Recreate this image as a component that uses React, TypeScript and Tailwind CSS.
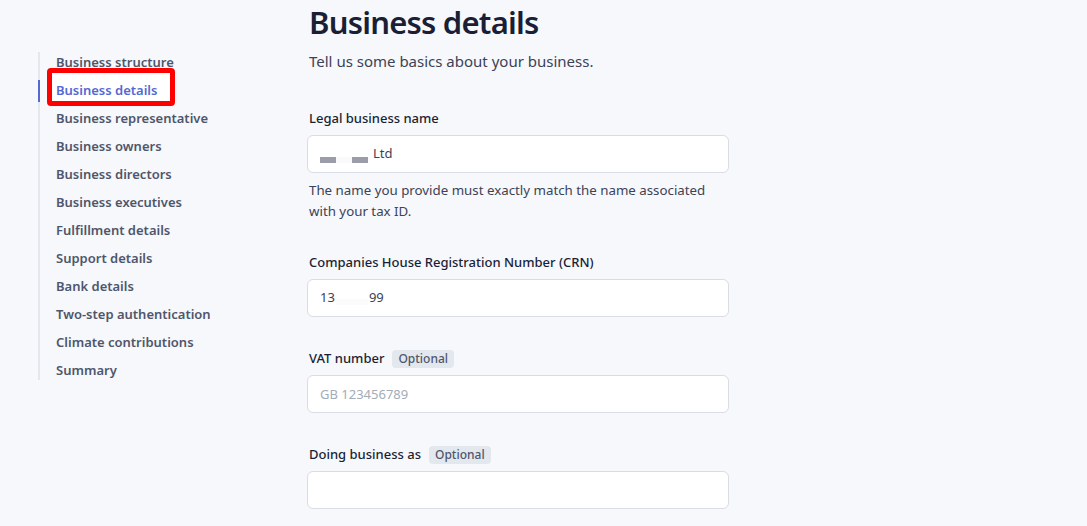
import React from "react";

const steps = [
  "Business structure",
  "Business details",
  "Business representative",
  "Business owners",
  "Business directors",
  "Business executives",
  "Fulfillment details",
  "Support details",
  "Bank details",
  "Two-step authentication",
  "Climate contributions",
  "Summary",
];

export default function App() {
  return (
    <div
      className="w-[1087px] h-[526px] overflow-hidden bg-[#f6f8fb] flex"
      style={{ fontFamily: '"Noto Sans", "Open Sans", Arial, sans-serif' }}
    >
      {/* Steps sidebar */}
      <div className="w-[307px] shrink-0 pl-[38px] pt-[52px]">
        <nav className="flex flex-col border-l-2 border-[#e3e8ee] w-[200px] h-[328px]">
          <div className="-mt-[3px]">
            {steps.map((s) => (
              <StepItem key={s} label={s} active={s === "Business details"} />
            ))}
          </div>
        </nav>
      </div>

      {/* Form */}
      <div className="w-[422px] pt-[1px]">
        <h1 className="pl-[2px] text-[31px] leading-[42px] font-semibold text-[#1a1f36] tracking-tight">
          Business details
        </h1>
        <p className="pl-[2px] mt-[7px] text-[15px] leading-[22px] text-[#3c4257]">
          Tell us some basics about your business.
        </p>

        <Field label="Legal business name" className="mt-[37px]">
          <div className="h-[38px] bg-white border border-[#d8dee4] rounded-md flex items-center px-3 text-[13px] text-[#3c4257]">
            <span className="w-4 h-[6px] bg-[#9a9ca8] mt-[11px]" />
            <span className="w-4 h-[6px] bg-[#fafafa] mt-[11px]" />
            <span className="w-4 h-[6px] bg-[#9a9ca8] mt-[11px]" />
            <span className="ml-[5px] -mt-[1px]">Ltd</span>
          </div>
          <p className="pl-[2px] mt-[7px] text-[13.3px] leading-[21px] text-[#3c4257] max-w-[405px]">
            The name you provide must exactly match the name associated with your tax ID.
          </p>
        </Field>

        <Field label="Companies House Registration Number (CRN)" className="mt-[31px]">
          <div className="h-[38px] bg-white border border-[#d8dee4] rounded-md flex items-center px-3 text-[13px] text-[#3c4257]">
            <span>13</span>
            <span className="w-8 h-[6px] bg-[#fbfbfb] mx-[1px] mt-[8px]" />
            <span>99</span>
          </div>
        </Field>

        <Field label="VAT number" optional className="mt-[32px]">
          <input
            placeholder="GB 123456789"
            className="w-full h-[38px] bg-white border border-[#d8dee4] rounded-md px-3 text-[13px] text-[#3c4257] placeholder:text-[#a3acb9] outline-none"
          />
        </Field>

        <Field label="Doing business as" optional className="mt-[32px]">
          <input className="w-full h-[38px] bg-white border border-[#d8dee4] rounded-md px-3 text-[13px] outline-none" />
        </Field>
      </div>
    </div>
  );
}

function StepItem({ label, active }: { label: string; active: boolean }) {
  return (
    <div className="relative h-7 flex items-center pl-4 -ml-[2px] border-l-2 border-transparent">
      {active && (
        <>
          <div className="absolute -left-[2px] top-[3px] w-[2px] h-[22px] bg-[#5469d4]" />
          <div className="absolute left-[7px] -top-[9px] w-[128px] h-[38px] border-[5px] border-[#ff0000] rounded-[4px] bg-white" />
        </>
      )}
      <span
        className={`relative text-[13px] font-semibold ${active ? "text-[#5469d4]" : "text-[#4f566b]"}`}
      >
        {label}
      </span>
    </div>
  );
}

function Field({
  label,
  optional,
  className,
  children,
}: {
  label: string;
  optional?: boolean;
  className?: string;
  children: React.ReactNode;
}) {
  return (
    <div className={className}>
      <div className="flex items-center gap-2 h-[20px] mb-[6px] pl-[2px]">
        <span className="text-[13px] font-medium text-[#1a1f36]">{label}</span>
        {optional && (
          <span className="text-[12px] font-medium text-[#4f566b] bg-[#e3e8ee] rounded px-1.5 h-[18px] flex items-center">
            Optional
          </span>
        )}
      </div>
      {children}
    </div>
  );
}
